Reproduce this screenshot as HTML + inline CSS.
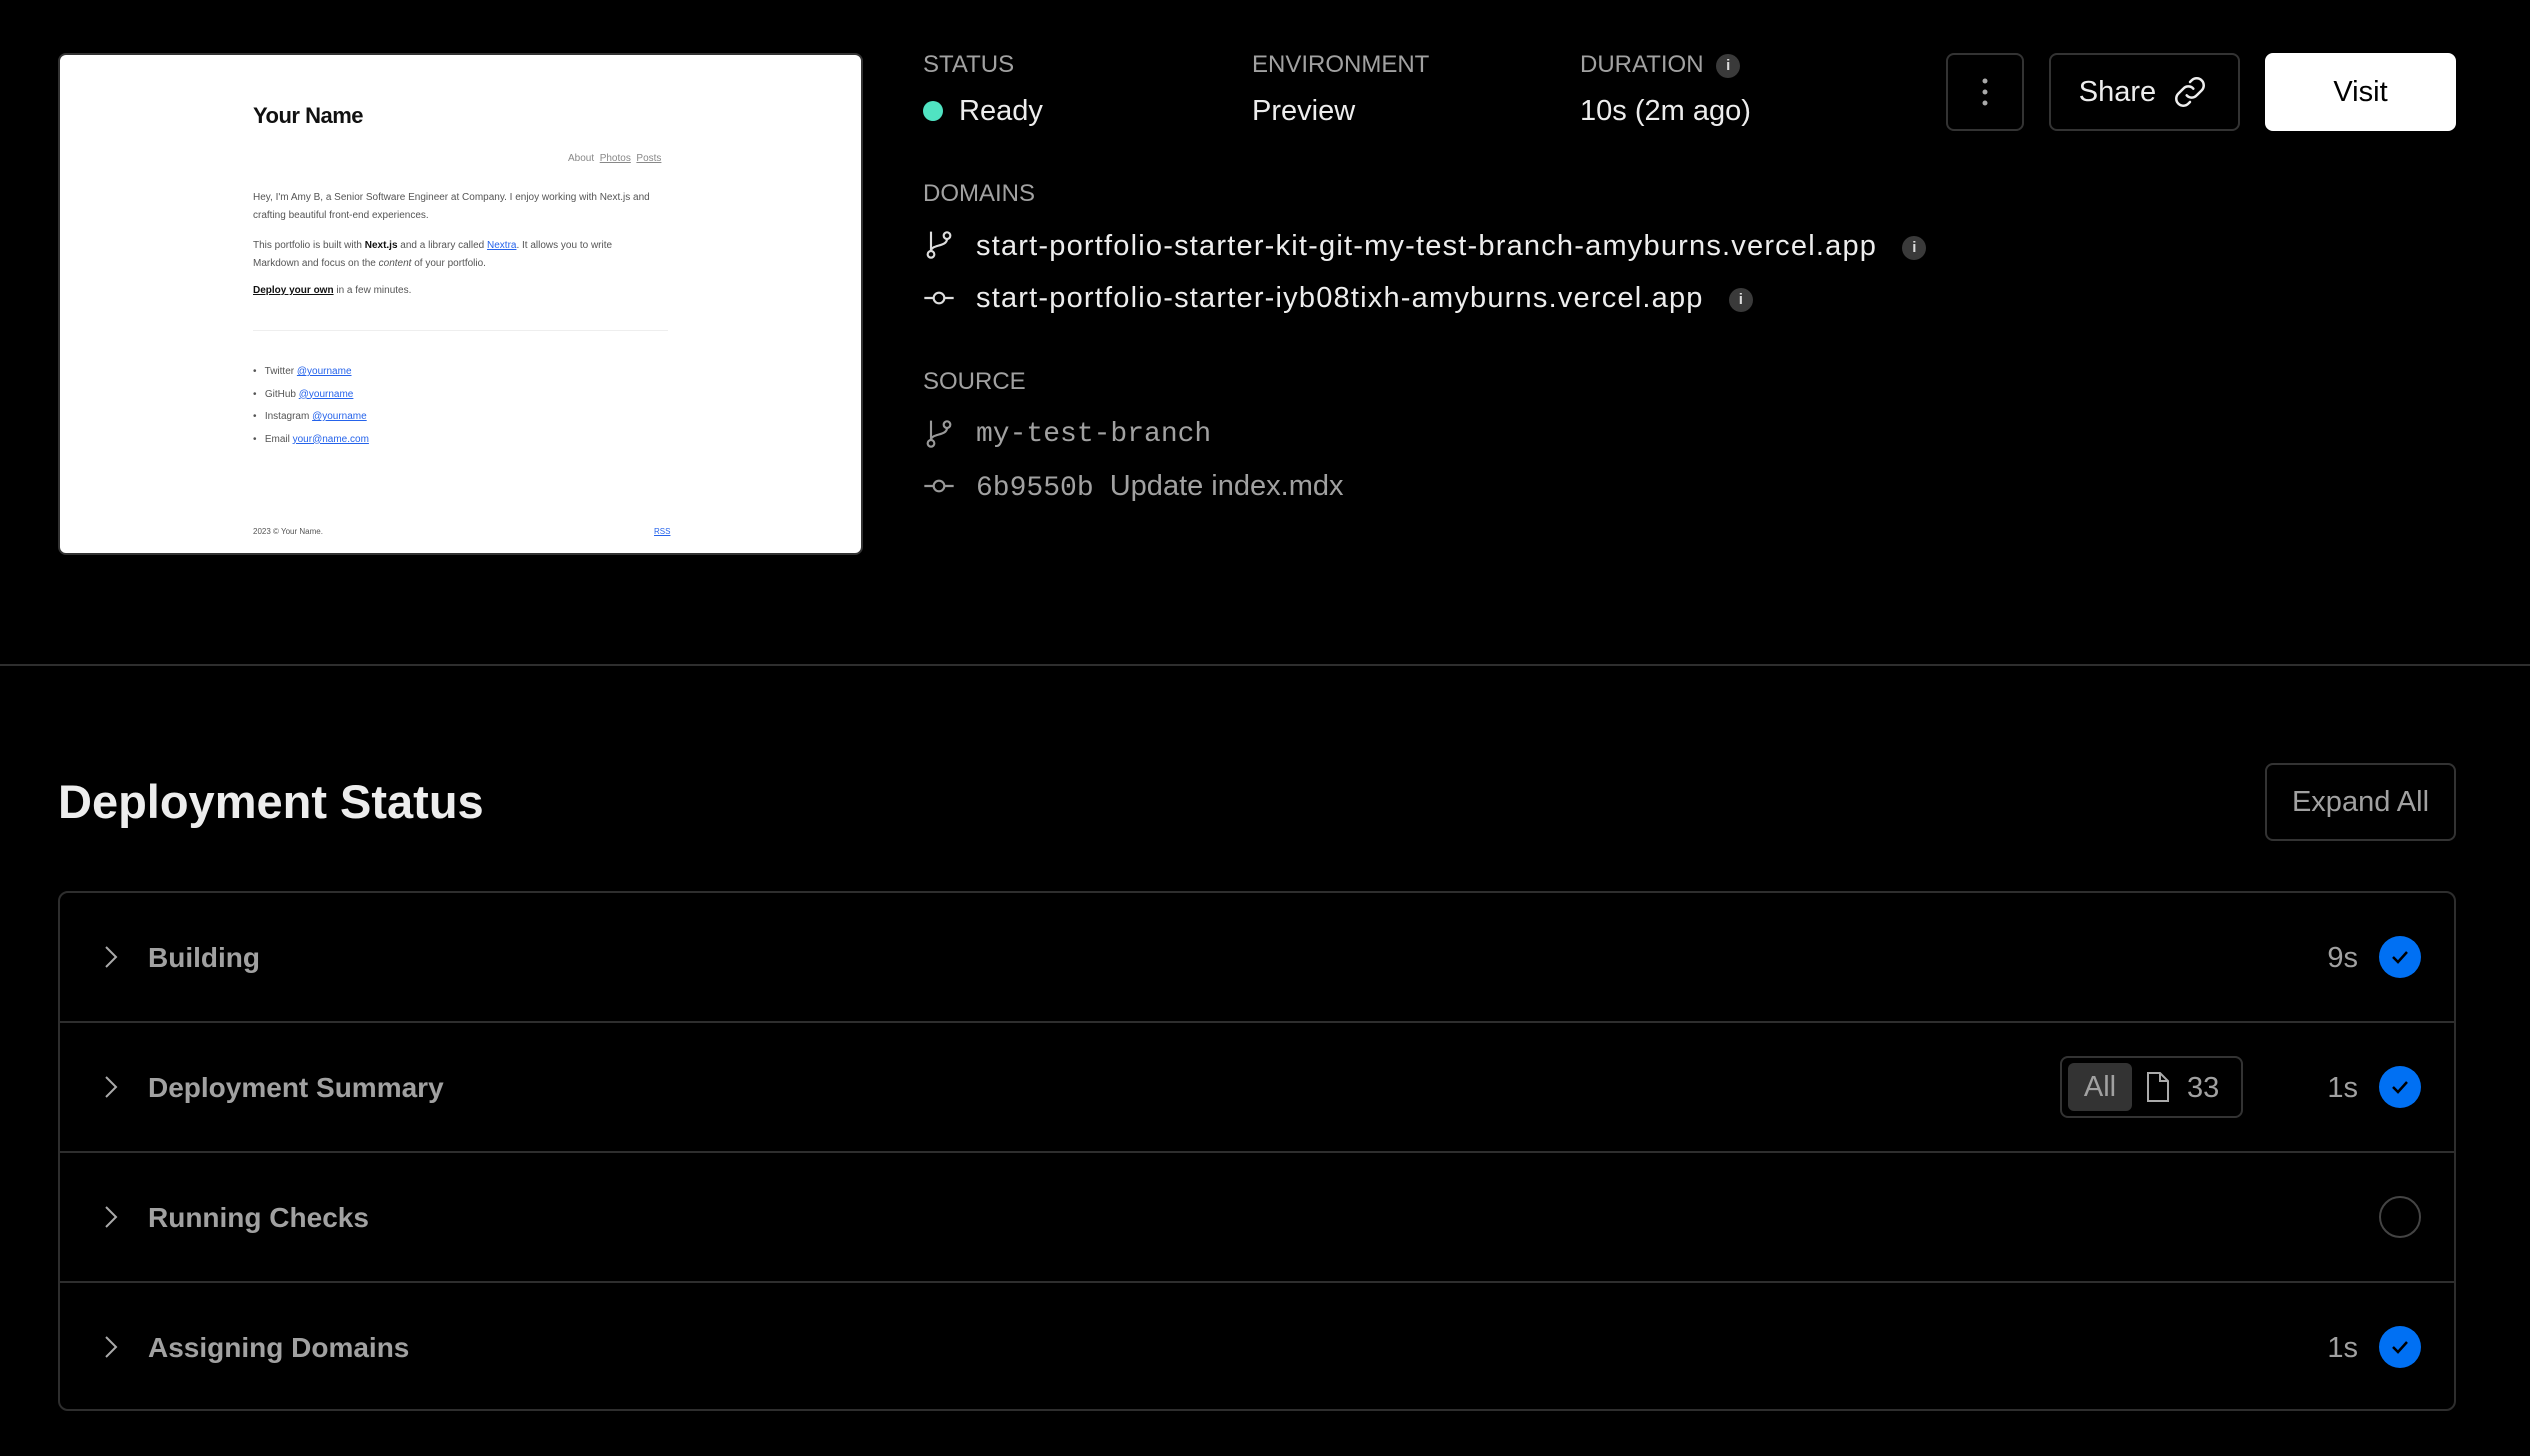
<!DOCTYPE html>
<html><head><meta charset="utf-8"><style>
*{margin:0;padding:0;box-sizing:border-box}
body{width:2530px;height:1456px;background:#000;font-family:"Liberation Sans",sans-serif;color:#ededed;position:relative;overflow:hidden}
.a{position:absolute;white-space:nowrap}
.lbl{font-size:24px;color:#a1a1a1;}
.val{font-size:29px;color:#ededed}
.dom{letter-spacing:1.2px}
.thumb{position:absolute;left:58px;top:53px;width:805px;height:502px;background:#fff;border-radius:8px;border:2px solid #333;color:#333;overflow:hidden}
.thumb .a{font-size:10px;color:#555}
.btn{position:absolute;border:2px solid #333;border-radius:8px;display:flex;align-items:center;justify-content:center;font-size:29px}
.info{display:inline-block;width:24px;height:24px;border-radius:50%;background:#3a3a3a;color:#ddd;font-size:15px;text-align:center;line-height:24px;font-weight:bold;letter-spacing:0}
.card{position:absolute;left:58px;top:891px;width:2398px;height:520px;border:2px solid #2e2e2e;border-radius:10px}
.row{position:absolute;left:0;width:100%;height:130px;border-bottom:2px solid #2e2e2e}
.row .t{position:absolute;left:88px;top:0;line-height:130px;font-size:28px;font-weight:bold;color:#a1a1a1}
.row svg.ch{position:absolute;left:38px;top:51px}
.chk{position:absolute;left:2319px;top:43px;width:42px;height:42px;border-radius:50%;background:#0070f3}
.tm{position:absolute;right:96px;top:0;line-height:130px;font-size:29px;color:#a1a1a1}
</style></head><body>
<div class="thumb">
 <div class="a" style="left:193px;top:48px;font-size:22px;font-weight:bold;color:#111;letter-spacing:-0.5px">Your Name</div>
 <div class="a" style="left:508px;top:98px;color:#888">About&nbsp; <u>Photos</u>&nbsp; <u>Posts</u></div>
 <div class="a" style="left:193px;top:134px;line-height:18px">Hey, I'm Amy B, a Senior Software Engineer at Company. I enjoy working with Next.js and<br>crafting beautiful front-end experiences.</div>
 <div class="a" style="left:193px;top:182px;line-height:18px">This portfolio is built with <b style="color:#111">Next.js</b> and a library called <u style="color:#2563eb">Nextra</u>. It allows you to write<br>Markdown and focus on the <i>content</i> of your portfolio.</div>
 <div class="a" style="left:193px;top:230px"><b style="color:#111"><u>Deploy your own</u></b> in a few minutes.</div>
 <div class="a" style="left:193px;top:275px;width:415px;border-top:1px solid #eee"></div>
 <div class="a" style="left:193px;top:306px;line-height:22.5px">•&nbsp;&nbsp; Twitter <u style="color:#2563eb">@yourname</u><br>•&nbsp;&nbsp; GitHub <u style="color:#2563eb">@yourname</u><br>•&nbsp;&nbsp; Instagram <u style="color:#2563eb">@yourname</u><br>•&nbsp;&nbsp; Email <u style="color:#2563eb">your@name.com</u></div>
 <div class="a" style="left:193px;top:472px;font-size:8px">2023 © Your Name.</div>
 <div class="a" style="left:594px;top:472px;font-size:8px;color:#2563eb"><u>RSS</u></div>
</div>

<div class="a lbl" style="left:923px;top:51px">STATUS</div>
<div class="a val" style="left:923px;top:95px"><span style="display:inline-block;width:20px;height:20px;border-radius:50%;background:#50e3c2;vertical-align:-1px;margin-right:16px"></span>Ready</div>
<div class="a lbl" style="left:1252px;top:51px">ENVIRONMENT</div>
<div class="a val" style="left:1252px;top:95px">Preview</div>
<div class="a lbl" style="left:1580px;top:51px">DURATION <span class="info" style="vertical-align:2px;margin-left:6px">i</span></div>
<div class="a val" style="left:1580px;top:95px">10s (2m ago)</div>

<div class="btn" style="left:1946px;top:53px;width:78px;height:78px"><svg width="6" height="30"><circle cx="3" cy="4" r="2.5" fill="#aaa"/><circle cx="3" cy="15" r="2.5" fill="#aaa"/><circle cx="3" cy="26" r="2.5" fill="#aaa"/></svg></div>
<div class="btn" style="left:2049px;top:53px;width:191px;height:78px">Share<svg width="40" height="40" viewBox="0 0 24 24" style="margin-left:14px" fill="none" stroke="#eee" stroke-width="1.5" stroke-linecap="round"><path d="M10 14a4 4 0 0 0 6 0l3-3a4 4 0 0 0-6-6l-1 1"/><path d="M14 10a4 4 0 0 0-6 0l-3 3a4 4 0 0 0 6 6l1-1"/></svg></div>
<div class="btn" style="left:2265px;top:53px;width:191px;height:78px;background:#fff;color:#000;border-color:#fff">Visit</div>

<div class="a lbl" style="left:923px;top:180px">DOMAINS</div>
<svg class="a" style="left:923px;top:229px" width="32" height="32" viewBox="0 0 24 24" fill="none" stroke="#ddd" stroke-width="1.6"><circle cx="6" cy="19" r="2.5"/><circle cx="18" cy="5" r="2.5"/><path d="M6 2v14.5M18 7.5c0 6-12 4-12 9"/></svg>
<div class="a val dom" style="left:976px;top:230px">start-portfolio-starter-kit-git-my-test-branch-amyburns.vercel.app <span class="info" style="vertical-align:3px;margin-left:16px">i</span></div>
<svg class="a" style="left:923px;top:282px" width="32" height="32" viewBox="0 0 24 24" fill="none" stroke="#ddd" stroke-width="1.6"><circle cx="12" cy="12" r="4"/><path d="M1 12h7M16 12h7"/></svg>
<div class="a val dom" style="left:976px;top:282px">start-portfolio-starter-iyb08tixh-amyburns.vercel.app <span class="info" style="vertical-align:3px;margin-left:16px">i</span></div>

<div class="a lbl" style="left:923px;top:368px">SOURCE</div>
<svg class="a" style="left:923px;top:418px" width="32" height="32" viewBox="0 0 24 24" fill="none" stroke="#999" stroke-width="1.6"><circle cx="6" cy="19" r="2.5"/><circle cx="18" cy="5" r="2.5"/><path d="M6 2v14.5M18 7.5c0 6-12 4-12 9"/></svg>
<div class="a" style="left:976px;top:419px;font-family:'Liberation Mono',monospace;font-size:28px;color:#a1a1a1">my-test-branch</div>
<svg class="a" style="left:923px;top:470px" width="32" height="32" viewBox="0 0 24 24" fill="none" stroke="#999" stroke-width="1.6"><circle cx="12" cy="12" r="4"/><path d="M1 12h7M16 12h7"/></svg>
<div class="a" style="left:976px;top:470px;font-size:29px;color:#a1a1a1"><span style="font-family:'Liberation Mono',monospace;font-size:28px">6b9550b</span>&nbsp; Update index.mdx</div>

<div class="a" style="left:0;top:664px;width:2530px;height:2px;background:#2e2e2e"></div>

<div class="a" style="left:58px;top:774px;font-size:47px;font-weight:bold;color:#ededed">Deployment Status</div>
<div class="btn" style="left:2265px;top:763px;width:191px;height:78px;color:#a1a1a1">Expand All</div>

<div class="card">
 <div class="row" style="top:0"><svg class="ch" width="24" height="26" viewBox="0 0 24 26" fill="none" stroke="#aaa" stroke-width="2"><path d="M8 3l10 10-10 10"/></svg><div class="t">Building</div><div class="tm">9s</div><div class="chk"><svg width="42" height="42" viewBox="0 0 42 42" fill="none" stroke="#000" stroke-width="2.5"><path d="M14 21l5 5 9-10"/></svg></div></div>
 <div class="row" style="top:130px"><svg class="ch" width="24" height="26" viewBox="0 0 24 26" fill="none" stroke="#aaa" stroke-width="2"><path d="M8 3l10 10-10 10"/></svg><div class="t">Deployment Summary</div>
  <div class="a" style="left:2000px;top:33px;width:183px;height:62px;border:2px solid #333;border-radius:8px">
   <div class="a" style="left:6px;top:5px;width:64px;height:48px;background:#333;border-radius:6px;color:#a1a1a1;font-size:29px;text-align:center;line-height:48px">All</div>
   <svg class="a" style="left:83px;top:13px" width="26" height="32" viewBox="0 0 26 32" fill="none" stroke="#aaa" stroke-width="2"><path d="M3 2h12l8 8v20H3z M15 2v8h8"/></svg>
   <div class="a" style="left:125px;top:0;line-height:60px;font-size:29px;color:#a1a1a1">33</div>
  </div>
  <div class="tm">1s</div><div class="chk"><svg width="42" height="42" viewBox="0 0 42 42" fill="none" stroke="#000" stroke-width="2.5"><path d="M14 21l5 5 9-10"/></svg></div></div>
 <div class="row" style="top:260px"><svg class="ch" width="24" height="26" viewBox="0 0 24 26" fill="none" stroke="#aaa" stroke-width="2"><path d="M8 3l10 10-10 10"/></svg><div class="t">Running Checks</div><div class="chk" style="background:none;border:2px solid #444"></div></div>
 <div class="row" style="top:390px;border-bottom:none"><svg class="ch" width="24" height="26" viewBox="0 0 24 26" fill="none" stroke="#aaa" stroke-width="2"><path d="M8 3l10 10-10 10"/></svg><div class="t">Assigning Domains</div><div class="tm">1s</div><div class="chk"><svg width="42" height="42" viewBox="0 0 42 42" fill="none" stroke="#000" stroke-width="2.5"><path d="M14 21l5 5 9-10"/></svg></div></div>
</div>
</body></html>
